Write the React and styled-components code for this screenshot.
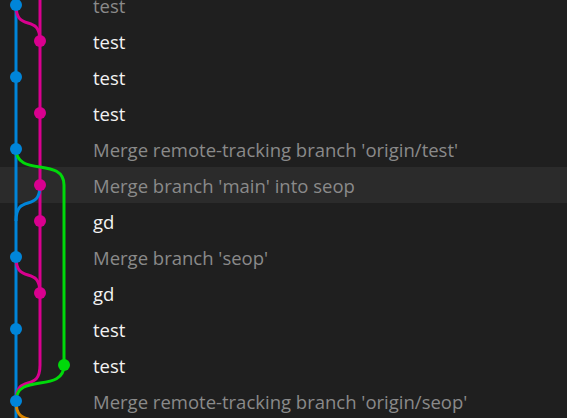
import styled, { createGlobalStyle } from 'styled-components';

const GlobalStyle = createGlobalStyle`
    html, body {
        margin: 0;
        padding: 0;
        background: #1f1f1f;
        overflow: hidden;
    }
`

const LANE = { B: 16, M: 40, G: 64 };
const COLOR = {
    blue: '#0085d9',
    magenta: '#d9008f',
    green: '#00d90a',
    orange: '#d98500',
};
const ROW_H = 36;
const MID = ROW_H / 2;

// each row: its dot, the one-row edges that start from it, and the message
const commits = [
    {
        msg: 'test', dim: true, dot: ['B', 'blue'],
        incoming: [['B', 'blue'], ['M', 'magenta']],
        edges: [['B', 'B', 'blue'], ['M', 'M', 'magenta'], ['B', 'M', 'magenta']],
    },
    { msg: 'test', dot: ['M', 'magenta'], edges: [['B', 'B', 'blue'], ['M', 'M', 'magenta']] },
    { msg: 'test', dot: ['B', 'blue'], edges: [['B', 'B', 'blue'], ['M', 'M', 'magenta']] },
    { msg: 'test', dot: ['M', 'magenta'], edges: [['B', 'B', 'blue'], ['M', 'M', 'magenta']] },
    {
        msg: "Merge remote-tracking branch 'origin/test'", dim: true, dot: ['B', 'blue'],
        edges: [['B', 'B', 'blue'], ['M', 'M', 'magenta'], ['B', 'G', 'green']],
    },
    {
        msg: "Merge branch 'main' into seop", dim: true, hover: true, dot: ['M', 'magenta'],
        edges: [['B', 'B', 'blue'], ['M', 'M', 'magenta'], ['G', 'G', 'green'], ['M', 'B', 'blue']],
    },
    { msg: 'gd', dot: ['M', 'magenta'], edges: [['B', 'B', 'blue'], ['M', 'M', 'magenta'], ['G', 'G', 'green']] },
    {
        msg: "Merge branch 'seop'", dim: true, dot: ['B', 'blue'],
        edges: [['B', 'B', 'blue'], ['M', 'M', 'magenta'], ['G', 'G', 'green'], ['B', 'M', 'magenta']],
    },
    { msg: 'gd', dot: ['M', 'magenta'], edges: [['B', 'B', 'blue'], ['M', 'M', 'magenta'], ['G', 'G', 'green']] },
    { msg: 'test', dot: ['B', 'blue'], edges: [['B', 'B', 'blue'], ['M', 'M', 'magenta'], ['G', 'G', 'green']] },
    {
        msg: 'test', dot: ['G', 'green'],
        edges: [['B', 'B', 'blue'], ['M', 'B', 'magenta'], ['G', 'B', 'green']],
    },
    {
        msg: "Merge remote-tracking branch 'origin/seop'", dim: true, dot: ['B', 'blue'],
        edges: [['B', 'B', 'blue'], ['B', 'M', 'orange']],
    },
];

const Viewport = styled.div`
    height: 418px;
    overflow: hidden;
`

const CommitList = styled.div`
    margin-top: -13px;
`

const Row = styled.div`
    display: flex;
    align-items: center;
    height: ${ROW_H}px;
    background: ${(p) => (p.$hover ? '#2b2b2b' : 'transparent')};
`

const GraphCell = styled.svg`
    flex-shrink: 0;
    width: 93px;
    height: ${ROW_H}px;
    overflow: visible;
    display: block;
`

const Message = styled.span`
    font-family: "Open Sans", "Noto Sans", sans-serif;
    font-size: 18.5px;
    white-space: nowrap;
    color: ${(p) => (p.$dim ? '#8a8a8a' : '#f2f2f2')};
`

function edgePath(from, to) {
    const x1 = LANE[from];
    const x2 = LANE[to];
    const y1 = MID;
    const y2 = MID + ROW_H;
    if (x1 === x2) return `M${x1} ${y1} V${y2}`;
    const d = ROW_H * 0.8;
    return `M${x1} ${y1} C${x1} ${y1 + d} ${x2} ${y2 - d} ${x2} ${y2}`;
}

function Graph({ commit }) {
    return (
        <GraphCell viewBox={`0 0 93 ${ROW_H}`}>
            {(commit.incoming || []).map(([lane, c]) => (
                <path key={'in' + lane} d={`M${LANE[lane]} 0 V${MID}`} stroke={COLOR[c]} strokeWidth="3" fill="none" />
            ))}
            {commit.edges.map(([from, to, c]) => (
                <path key={from + to} d={edgePath(from, to)} stroke={COLOR[c]} strokeWidth="3" fill="none" />
            ))}
            <circle cx={LANE[commit.dot[0]]} cy={MID} r="6" fill={COLOR[commit.dot[1]]} />
        </GraphCell>
    );
}

export default function App() {
    return (
        <>
            <GlobalStyle />
            <Viewport>
                <CommitList>
                    {commits.map((c, i) => (
                        <Row key={i} $hover={c.hover}>
                            <Graph commit={c} />
                            <Message $dim={c.dim}>{c.msg}</Message>
                        </Row>
                    ))}
                </CommitList>
            </Viewport>
        </>
    );
}
